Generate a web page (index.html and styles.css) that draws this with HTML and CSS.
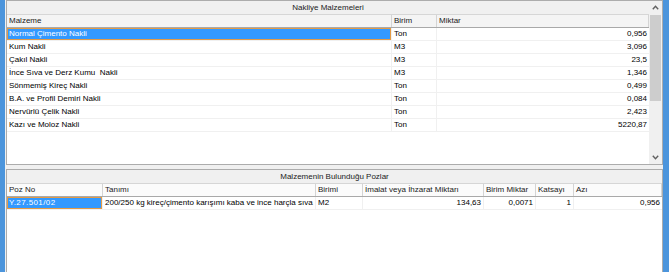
FILE: index.html
```html
<!DOCTYPE html>
<html>
<head>
    <meta charset="UTF-8">
    <title>Nakliye Malzemeleri</title>
    <link rel="stylesheet" href="styles.css">
</head>
<body>
    <div class="window">
        <!-- Üst liste -->
        <div class="pane pane-top">
            <div class="list">
                <div class="band">Nakliye Malzemeleri</div>
                <div class="row head cols-top">
                    <div class="cell">Malzeme</div>
                    <div class="cell">Birim</div>
                    <div class="cell">Miktar</div>
                </div>
                <div class="row cols-top">
                    <div class="cell selected">Normal Çimento Nakli</div>
                    <div class="cell">Ton</div>
                    <div class="cell num">0,956</div>
                </div>
                <div class="row cols-top">
                    <div class="cell">Kum Nakli</div>
                    <div class="cell">M3</div>
                    <div class="cell num">3,096</div>
                </div>
                <div class="row cols-top">
                    <div class="cell">Çakıl Nakli</div>
                    <div class="cell">M3</div>
                    <div class="cell num">23,5</div>
                </div>
                <div class="row cols-top">
                    <div class="cell">İnce Sıva ve Derz Kumu&nbsp; Nakli</div>
                    <div class="cell">M3</div>
                    <div class="cell num">1,346</div>
                </div>
                <div class="row cols-top">
                    <div class="cell">Sönmemiş Kireç Nakli</div>
                    <div class="cell">Ton</div>
                    <div class="cell num">0,499</div>
                </div>
                <div class="row cols-top">
                    <div class="cell">B.A. ve Profil Demiri Nakli</div>
                    <div class="cell">Ton</div>
                    <div class="cell num">0,084</div>
                </div>
                <div class="row cols-top">
                    <div class="cell">Nervürlü Çelik Nakli</div>
                    <div class="cell">Ton</div>
                    <div class="cell num">2,423</div>
                </div>
                <div class="row cols-top">
                    <div class="cell">Kazı ve Moloz Nakli</div>
                    <div class="cell">Ton</div>
                    <div class="cell num">5220,87</div>
                </div>
            </div>
            <div class="vscroll">
                <div class="arrow">
                    <svg width="7" height="5" viewBox="0 0 7 5"><polyline points="0.8,4.2 3.5,1.3 6.2,4.2" fill="none" stroke="#606060" stroke-width="1.4"/></svg>
                </div>
                <div class="track"><div class="thumb"></div></div>
                <div class="arrow">
                    <svg width="7" height="5" viewBox="0 0 7 5"><polyline points="0.8,0.8 3.5,3.7 6.2,0.8" fill="none" stroke="#606060" stroke-width="1.4"/></svg>
                </div>
            </div>
        </div>

        <!-- Alt liste -->
        <div class="pane pane-bottom">
            <div class="band">Malzemenin Bulunduğu Pozlar</div>
            <div class="row head cols-bottom">
                <div class="cell">Poz No</div>
                <div class="cell">Tanımı</div>
                <div class="cell">Birimi</div>
                <div class="cell">İmalat veya İhzarat Miktarı</div>
                <div class="cell">Birim Miktar</div>
                <div class="cell">Katsayı</div>
                <div class="cell">Azı</div>
            </div>
            <div class="row cols-bottom">
                <div class="cell selected poz">Y.27.501/02</div>
                <div class="cell">200/250 kg kireç/çimento karışımı kaba ve ince harçla sıva</div>
                <div class="cell">M2</div>
                <div class="cell num">134,63</div>
                <div class="cell num">0,0071</div>
                <div class="cell num">1</div>
                <div class="cell num">0,956</div>
            </div>
        </div>
    </div>
</body>
</html>
```

FILE: styles.css
```css
body {
    margin: 0;
    font-family: "Liberation Sans", Arial, sans-serif;
    font-size: 8px;
    color: #000;
}

.window {
    display: flex;
    flex-direction: column;
    gap: 4px;
    height: 272px;
    box-sizing: border-box;
    border-left: 5px solid #4c95dc;
    border-right: 6px solid #4c95dc;
    padding-left: 1px;
    background-color: #f0f0f0;
    overflow: hidden;
}

.pane {
    background-color: #fff;
    border: 1px solid #acacac;
}

.pane-top {
    display: flex;
    height: 165px;
    box-sizing: border-box;
}

.pane-bottom {
    flex: 1;
    border-bottom: none;
}

.list {
    flex: 1;
    min-width: 0;
}

.band {
    height: 13px;
    line-height: 13px;
    text-align: center;
    color: #222;
    background-color: #f0f0f0;
    border-bottom: 1px solid #d6d6d6;
}

.row {
    display: grid;
    height: 13px;
    box-sizing: border-box;
    border-bottom: 1px solid #f0f0f0;
}

.cols-top {
    grid-template-columns: 385px 45px 1fr;
}

.cols-bottom {
    grid-template-columns: 96px 213px 47px 121px 52px 38px 1fr;
}

.cell {
    padding: 0 2px;
    line-height: 12px;
    white-space: nowrap;
    overflow: hidden;
    border-right: 1px solid #f0f0f0;
}

.cell:last-child {
    border-right: none;
}

.head {
    height: 13px;
    border-bottom: 1px solid #a9a9a9;
    background-color: #f4f4f4;
    color: #222;
}

.pane-bottom .head {
    background-color: #fbfbfb;
}

.head .cell {
    border-right: 1px solid #d4d4d4;
}

.num {
    text-align: right;
}

.selected {
    background-color: #3399ff;
    color: #fff;
    box-shadow: inset 0 0 0 1px #e39a45;
}

.poz {
    letter-spacing: 0.4px;
}

/* Kaydırma çubuğu */
.vscroll {
    width: 13px;
    display: flex;
    flex-direction: column;
    background-color: #f0f0f0;
}

.arrow {
    height: 13px;
    display: flex;
    align-items: center;
    justify-content: center;
}

.track {
    flex: 1;
    padding: 1px 1px 0;
}

.thumb {
    height: 86px;
    background-color: #cdcdcd;
}
```
